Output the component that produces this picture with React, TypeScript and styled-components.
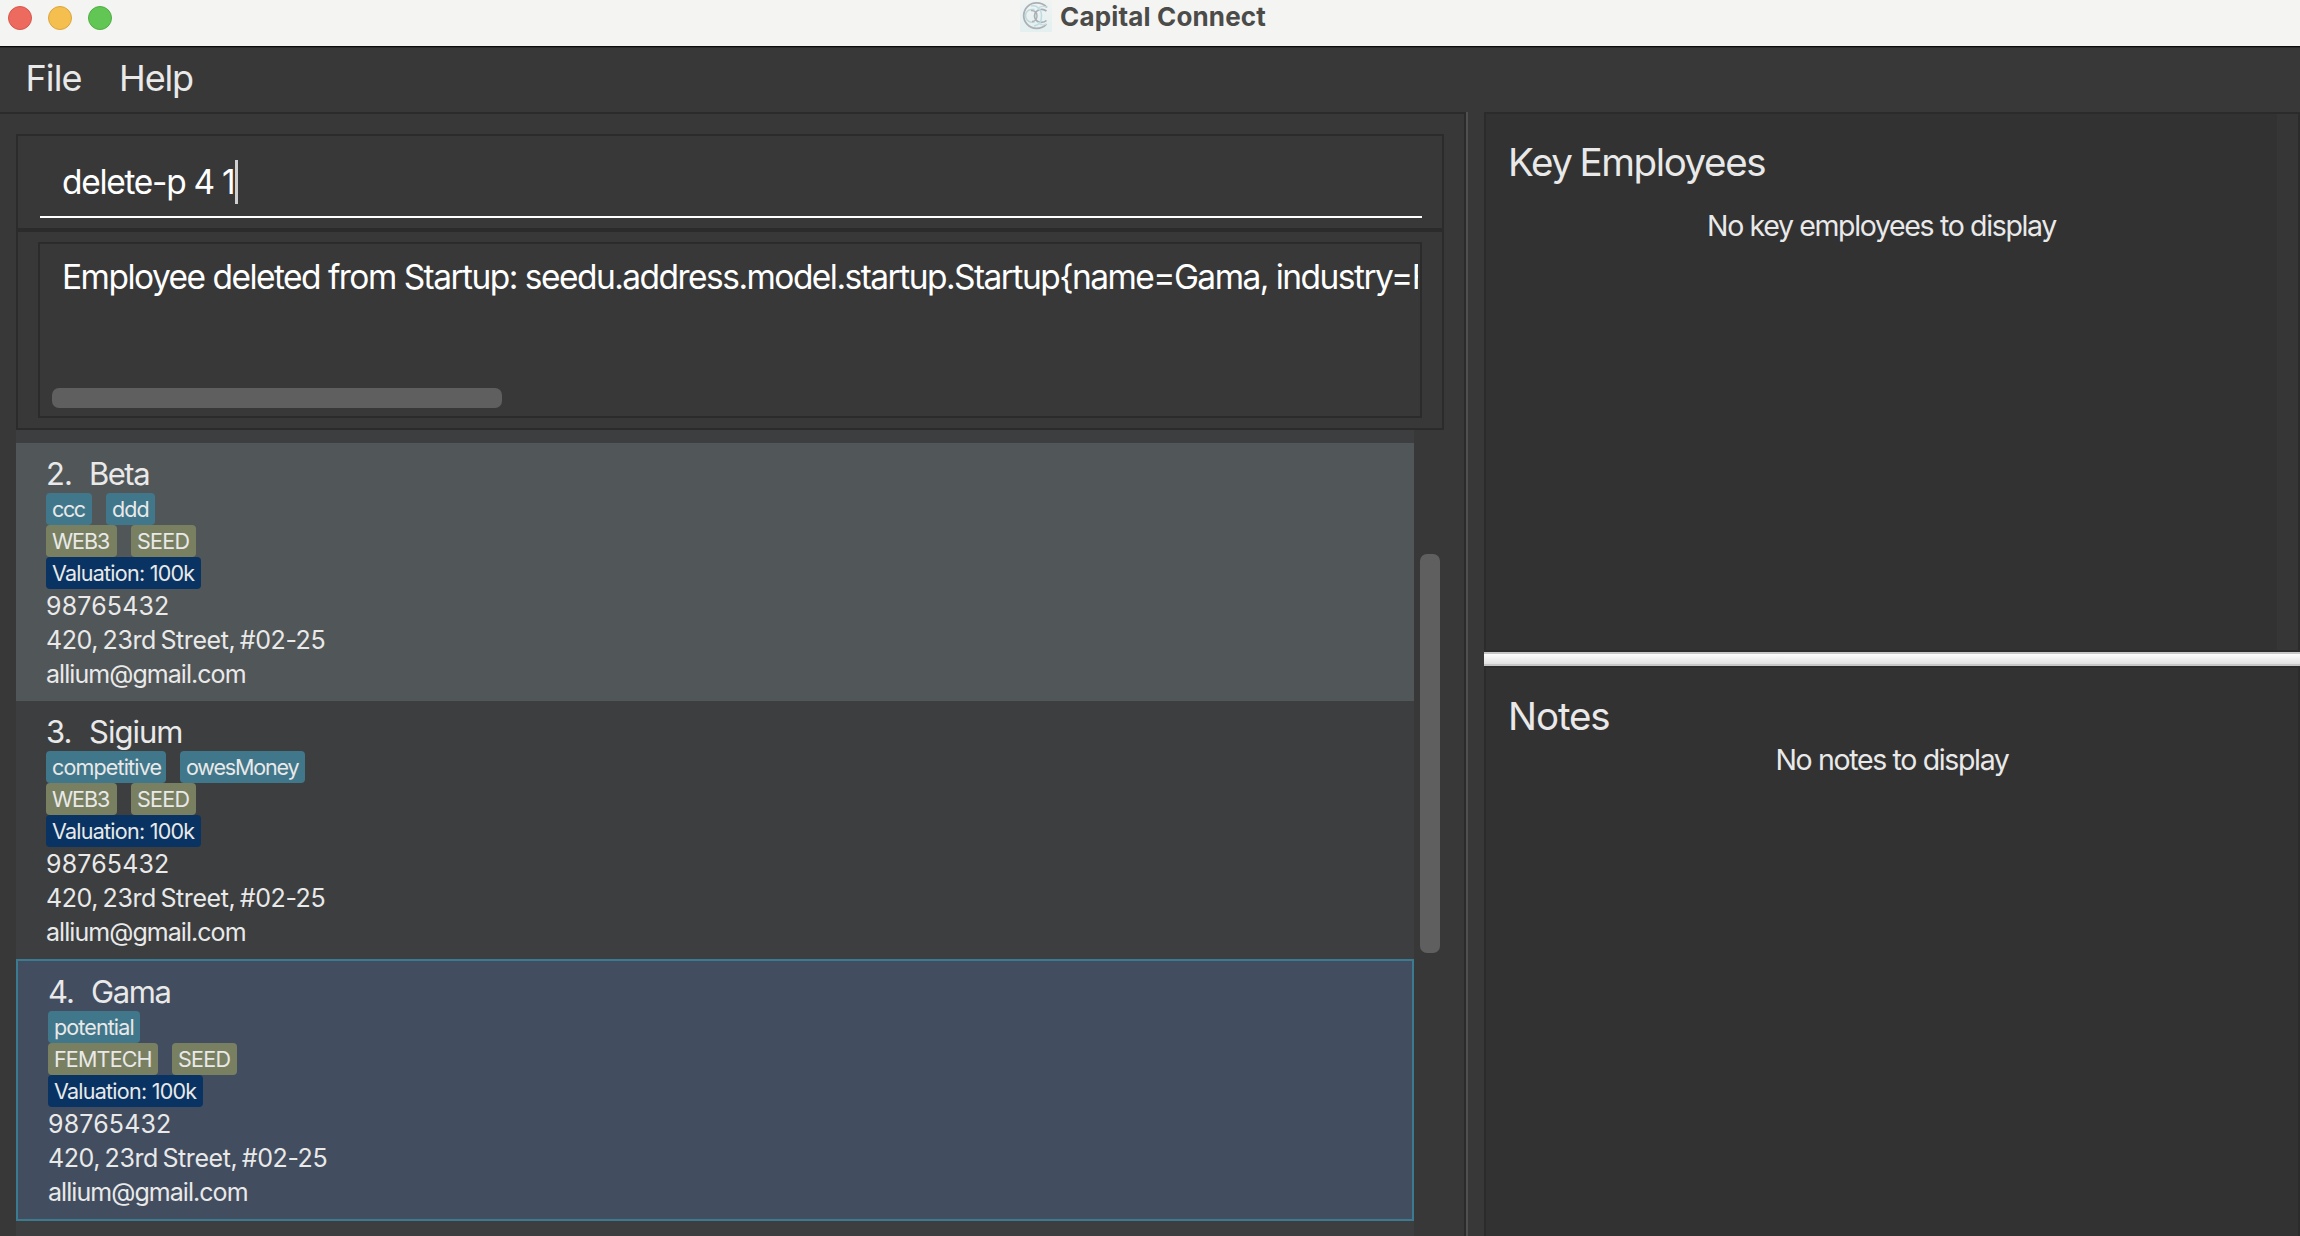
import React from "react";
import styled, { createGlobalStyle } from "styled-components";

const GlobalStyle = createGlobalStyle`
  * { box-sizing: border-box; }
  body { margin: 0; background: #383838; overflow: hidden; }
`;

const Window = styled.div`
  display: flex;
  flex-direction: column;
  width: 2300px;
  height: 1236px;
  overflow: hidden;
  background: #383838;
  color: #e9e9e9;
  font-family: Inter, "Liberation Sans", sans-serif;
  white-space: pre;
`;

const TitleBar = styled.header`
  display: grid;
  grid-template-columns: 1020px 1fr;
  flex: none;
  height: 48px;
  background: #f4f4f2;
  border-bottom: 1px solid #2a2a2a;
  box-shadow: inset 0 -1px 0 #0c0c0c;
`;

const Lights = styled.div`
  display: flex;
  gap: 16px;
  padding: 6px 0 0 8px;
`;

const Light = styled.span<{ $fill: string; $edge: string }>`
  width: 24px;
  height: 24px;
  border-radius: 50%;
  background: ${(p) => p.$fill};
  border: 1px solid ${(p) => p.$edge};
`;

const TitleGroup = styled.div`
  display: flex;
  gap: 6px;
`;

const Title = styled.h1`
  margin: 0;
  font-size: 26px;
  line-height: 33px;
  font-weight: 700;
  letter-spacing: 0.16px;
  color: #4b4b4a;
`;

const MenuBar = styled.nav`
  display: flex;
  flex: none;
  height: 64px;
  padding-left: 25.5px;
  gap: 37.5px;
`;

const MenuItem = styled.span<{ $tracking: number }>`
  font-size: 36px;
  line-height: 60px;
  letter-spacing: ${(p) => p.$tracking}px;
`;

const Body = styled.main`
  display: flex;
  flex: 1;
  min-height: 0;
`;

const LeftPane = styled.section`
  display: flex;
  flex-direction: column;
  width: 1466px;
  padding: 20px 20px 0 16px;
  border-top: 2px solid #2b2b2b;
  border-right: 2px solid #2b2b2b;
`;

const Splitter = styled.div`
  width: 18px;
  border-left: 2px solid #505050;
`;

const CommandBox = styled.div`
  flex: none;
  height: 96px;
  padding: 24px 20px 0 22px;
  border: 2px solid #2b2b2b;
`;

const CommandInput = styled.div`
  display: flex;
  height: 58px;
  padding-left: 22px;
  border-bottom: 2px solid #fff;
  color: #fff;
  font-size: 33.5px;
  line-height: 44px;
  letter-spacing: -1.29px;
`;

const Caret = styled.span`
  width: 3px;
  height: 44px;
  margin-left: 1px;
  background: #cfcfcf;
`;

const ResultBox = styled.div`
  flex: none;
  height: 200px;
  padding: 10px 20px 0 20px;
  border: 2px solid #2b2b2b;
`;

const ResultArea = styled.div`
  display: flex;
  flex-direction: column;
  justify-content: space-between;
  height: 176px;
  padding: 12px 2px 8px 12px;
  border: 2px solid #2b2b2b;
`;

const ResultText = styled.div`
  padding-left: 10px;
  overflow: hidden;
  color: #fff;
  font-size: 33.5px;
  line-height: 42px;
  letter-spacing: -1.53px;
`;

const HorizontalThumb = styled.div`
  width: 450px;
  height: 20px;
  border-radius: 7px;
  background: #5f5f5f;
`;

const ListArea = styled.div`
  display: flex;
  flex: 1;
  min-height: 0;
  gap: 6px;
`;

const List = styled.div`
  width: 1398px;
  padding-top: 13px;
  overflow: hidden;
  background: #3c3e3f;
`;

const VerticalThumb = styled.div`
  width: 20px;
  height: 399px;
  margin-top: 124px;
  border-radius: 7px;
  background: #5f5f5f;
`;

type Tone = "even" | "odd" | "selected";

const cardFill: Record<Tone, string> = {
  even: "#515658",
  odd: "#3c3e3f",
  selected: "#424d5f",
};

const Card = styled.article<{ $tone: Tone }>`
  padding: 11px 30px 10px;
  background: ${(p) => cardFill[p.$tone]};
  border: ${(p) => (p.$tone === "selected" ? "2px solid #3a7b92" : "none")};
`;

const CardTitle = styled.div`
  display: flex;
  font-size: 31px;
  line-height: 39px;
`;

const CardIndex = styled.span`
  width: 43px;
  letter-spacing: -0.9px;
`;

const CardName = styled.span<{ $tracking: number }>`
  letter-spacing: ${(p) => p.$tracking}px;
`;

const TagRow = styled.div`
  display: flex;
  gap: 14px;
  height: 32px;
`;

const tagFill = { label: "#41778a", industry: "#798062", valuation: "#083363" };

const Tag = styled.span<{ $kind: keyof typeof tagFill; $width: number; $tracking: number }>`
  width: ${(p) => p.$width}px;
  padding-left: 6px;
  border-radius: 4px;
  background: ${(p) => tagFill[p.$kind]};
  font-size: 21.5px;
  line-height: 32px;
  letter-spacing: ${(p) => p.$tracking}px;
`;

const Detail = styled.div<{ $tracking: number }>`
  font-size: 25px;
  line-height: 34px;
  letter-spacing: ${(p) => p.$tracking}px;
  word-spacing: -2px;
`;

const RightPane = styled.section`
  display: flex;
  flex-direction: column;
  width: 816px;
`;

const SidePanel = styled.div<{ $height: number; $gutter: number; $top: number }>`
  flex: none;
  height: ${(p) => p.$height}px;
  padding-top: ${(p) => p.$top}px;
  border: 2px solid #2b2b2b;
  border-bottom-width: ${(p) => (p.$gutter ? 2 : 0)}px;
  background: linear-gradient(to left, #363636 ${(p) => p.$gutter}px, #323232 ${(p) => p.$gutter}px);
  padding-right: ${(p) => p.$gutter}px;
`;

const PanelTitle = styled.h2<{ $tracking: number }>`
  margin: 0;
  padding-left: 22px;
  font-size: 38.5px;
  line-height: 48px;
  font-weight: 400;
  letter-spacing: ${(p) => p.$tracking}px;
  word-spacing: -1.5px;
`;

const Placeholder = styled.p<{ $gap: number }>`
  margin: ${(p) => p.$gap}px 0 0;
  font-size: 28.5px;
  line-height: 40px;
  letter-spacing: -1.35px;
  text-align: center;
`;

const Divider = styled.div`
  flex: none;
  height: 14px;
  border: solid #c6c6c6;
  border-width: 2px 0;
  background: linear-gradient(#fcfcfc, #e1e1e1);
`;

interface TagData {
  text: string;
  width: number;
  tracking: number;
}

interface Startup {
  index: number;
  name: string;
  tracking: number;
  tone: Tone;
  labels: TagData[];
  stage: TagData[];
}

const web3: TagData = { text: "WEB3", width: 71, tracking: -1.1 };
const seed: TagData = { text: "SEED", width: 65, tracking: -0.7 };

const startups: Startup[] = [
  {
    index: 2,
    name: "Beta",
    tracking: -1.5,
    tone: "even",
    labels: [
      { text: "ccc", width: 46, tracking: -1.4 },
      { text: "ddd", width: 49, tracking: -0.9 },
    ],
    stage: [web3, seed],
  },
  {
    index: 3,
    name: "Sigium",
    tracking: -1.0,
    tone: "odd",
    labels: [
      { text: "competitive", width: 120, tracking: -0.84 },
      { text: "owesMoney", width: 125, tracking: -1.16 },
    ],
    stage: [web3, seed],
  },
  {
    index: 4,
    name: "Gama",
    tracking: -1.4,
    tone: "selected",
    labels: [{ text: "potential", width: 92, tracking: -0.88 }],
    stage: [{ text: "FEMTECH", width: 110, tracking: -0.82 }, seed],
  },
];

const AppLogo = () => (
  <svg width="34" height="32" viewBox="0 0 34 32" fill="none">
    <defs>
      <linearGradient id="tile" x1="0" y1="0" x2="0" y2="1">
        <stop offset="0" stopColor="#f0f4f3" />
        <stop offset="1" stopColor="#e4efef" />
      </linearGradient>
    </defs>
    <rect width="32" height="32" fill="url(#tile)" />
    <path d="M27 7.500C24 4 20.500 2.800 16.500 2.800A12.800 12.800 0 1 0 16.500 28.400C20.500 28.400 24 27 26.500 24" stroke="#abb0b6" strokeWidth="1.800" />
    <path d="M14.500 9.500H11.500A6 6 0 0 0 5.500 15.500A6.500 6.500 0 0 0 12 22.200H14.500" stroke="#bcd8dd" strokeWidth="1.500" />
    <path d="M11 10.500C15 10.500 17 13 17 16S15 21.500 12 21.500" stroke="#adb3b9" strokeWidth="1.500" />
    <path d="M26.500 11C24.500 9.500 22.500 9 20.500 9.500C16 10.500 14.500 13.500 14.500 16S16.500 22.300 21 22.300C23.500 22.300 25.500 21.500 26.500 20.500" stroke="#a7aeb5" strokeWidth="1.700" />
    <path d="M11 6C17 4.500 21.500 9.500 21.500 15.500S20.500 24.500 14 26" stroke="#bfdbe0" strokeWidth="1.500" />
    <path d="M27 7C22 5.500 18.500 7 17.500 10M26.500 24C23 25.500 19.500 24.500 17.500 22" stroke="#c6dee2" strokeWidth="1.300" />
  </svg>
);

const StartupCard = ({ startup }: { startup: Startup }) => (
  <Card $tone={startup.tone}>
    <CardTitle>
      <CardIndex>{startup.index}.</CardIndex>
      <CardName $tracking={startup.tracking}>{startup.name}</CardName>
    </CardTitle>
    <TagRow>
      {startup.labels.map((t) => (
        <Tag key={t.text} $kind="label" $width={t.width} $tracking={t.tracking}>
          {t.text}
        </Tag>
      ))}
    </TagRow>
    <TagRow>
      {startup.stage.map((t) => (
        <Tag key={t.text} $kind="industry" $width={t.width} $tracking={t.tracking}>
          {t.text}
        </Tag>
      ))}
    </TagRow>
    <TagRow>
      <Tag $kind="valuation" $width={155} $tracking={-0.75}>
        Valuation: 100k
      </Tag>
    </TagRow>
    <Detail $tracking={0.14}>98765432</Detail>
    <Detail $tracking={-0.43}>420, 23rd Street, #02-25</Detail>
    <Detail $tracking={-0.95}>allium@gmail.com</Detail>
  </Card>
);

export default function App() {
  return (
    <Window>
      <GlobalStyle />
      <TitleBar>
        <Lights>
          <Light $fill="#ed6a5f" $edge="#d9564c" />
          <Light $fill="#f5bf4f" $edge="#dba63c" />
          <Light $fill="#62c655" $edge="#4fae42" />
        </Lights>
        <TitleGroup>
          <AppLogo />
          <Title>Capital Connect</Title>
        </TitleGroup>
      </TitleBar>
      <MenuBar>
        <MenuItem $tracking={-0.9}>File</MenuItem>
        <MenuItem $tracking={-1.15}>Help</MenuItem>
      </MenuBar>
      <Body>
        <LeftPane>
          <CommandBox>
            <CommandInput>
              delete-p 4 1<Caret />
            </CommandInput>
          </CommandBox>
          <ResultBox>
            <ResultArea>
              <ResultText>
                {"Employee deleted from Startup: seedu.address.model.startup.Startup{name=Gama, industry=F"}
              </ResultText>
              <HorizontalThumb />
            </ResultArea>
          </ResultBox>
          <ListArea>
            <List>
              {startups.map((s) => (
                <StartupCard key={s.index} startup={s} />
              ))}
            </List>
            <VerticalThumb />
          </ListArea>
        </LeftPane>
        <Splitter />
        <RightPane>
          <SidePanel $height={540} $gutter={21} $top={24}>
            <PanelTitle $tracking={-1.39}>Key Employees</PanelTitle>
            <Placeholder $gap={19.5}>No key employees to display</Placeholder>
          </SidePanel>
          <Divider />
          <SidePanel $height={570} $gutter={0} $top={24}>
            <PanelTitle $tracking={-1.1}>Notes</PanelTitle>
            <Placeholder $gap={-0.5}>No notes to display</Placeholder>
          </SidePanel>
        </RightPane>
      </Body>
    </Window>
  );
}
